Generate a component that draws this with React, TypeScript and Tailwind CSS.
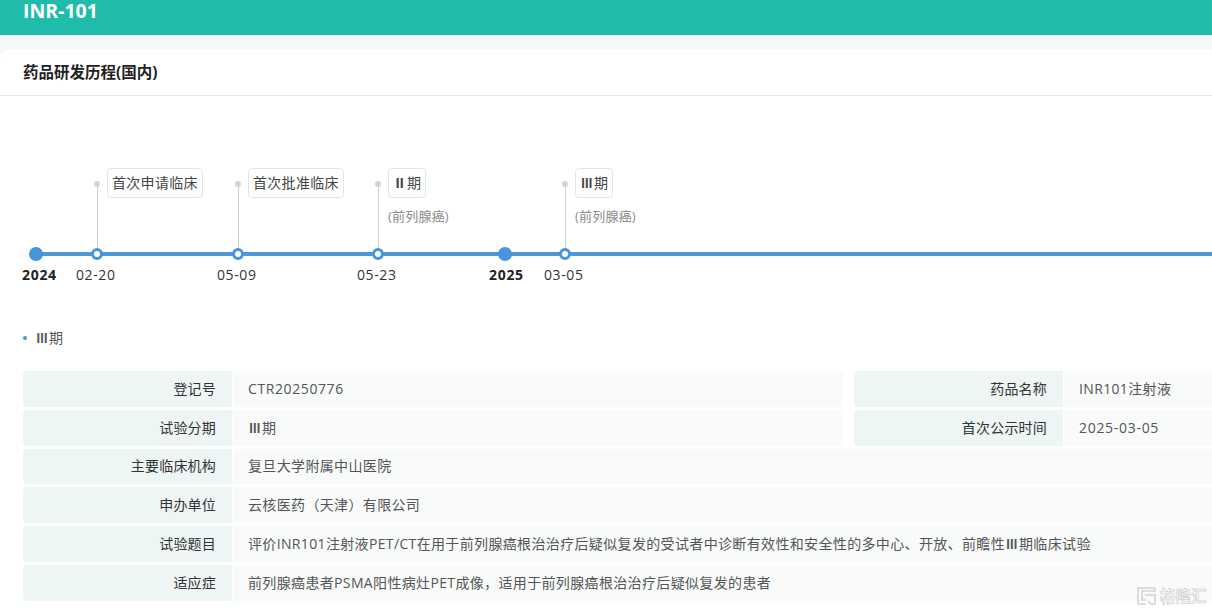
type Milestone = {
  left: string
  date: string
  dateLeft: string
  year?: boolean
  tag?: React.ReactNode
  note?: string
}

// 罗马数字要撑满一个全角宽度，和原图一致
const Roman = ({ n }: { n: 'Ⅱ' | 'Ⅲ' }) => (
  <>
    <span className={`inline-block w-[14px] text-center font-['DejaVu_Sans',sans-serif] ${n === 'Ⅱ' ? 'scale-x-[1.5]' : 'scale-x-[1.35]'}`}>
      {n}
    </span>
    期
  </>
)

const milestones: Milestone[] = [
  { left: 'left-[36px]', date: '2024', dateLeft: 'left-[-14px]', year: true },
  { left: 'left-[97px]', date: '02-20', dateLeft: 'left-[-21px]', tag: '首次申请临床' },
  { left: 'left-[238px]', date: '05-09', dateLeft: 'left-[-21px]', tag: '首次批准临床' },
  { left: 'left-[378px]', date: '05-23', dateLeft: 'left-[-21px]', tag: <Roman n="Ⅱ" />, note: '(前列腺癌)' },
  { left: 'left-[505px]', date: '2025', dateLeft: 'left-[-16px]', year: true },
  { left: 'left-[565px]', date: '03-05', dateLeft: 'left-[-21px]', tag: <Roman n="Ⅲ" />, note: '(前列腺癌)' },
]

function Node({ item }: { item: Milestone }) {
  if (item.year) {
    return (
      <div className={`absolute top-0 ${item.left}`}>
        <div className="absolute left-[-7px] top-[143px] h-[14px] w-[14px] rounded-full bg-[#4596dc]" />
        <div className={`absolute top-[161px] whitespace-nowrap text-[14px] font-bold leading-[20px] tracking-[0.7px] text-[#222] ${item.dateLeft}`}>
          {item.date}
        </div>
      </div>
    )
  }
  return (
    <div className={`absolute top-0 ${item.left}`}>
      <div className="absolute left-[-3px] top-[77px] h-[6px] w-[6px] rounded-full bg-[#d4d4d4]" />
      <div className="absolute left-0 top-[80px] h-[68px] w-px bg-[#d0d0d0]" />
      <div className="absolute left-[10px] top-[64px] whitespace-nowrap rounded-[4px] border border-[#e4e4e4] bg-white px-[4px] py-[4px] text-[14px] leading-[20px] tracking-[0.3px] text-[#444]">
        {item.tag}
      </div>
      {item.note && (
        <div className="absolute left-[10px] top-[102px] whitespace-nowrap text-[13px] leading-[20px] tracking-[0.2px] text-[#8a8a8a]">
          {item.note}
        </div>
      )}
      <div className="absolute left-[-6px] top-[144px] h-[12px] w-[12px] rounded-full border-[3px] border-[#4596dc] bg-white" />
      <div className={`absolute top-[161px] whitespace-nowrap text-[14px] leading-[20px] tracking-[0.6px] text-[#333] ${item.dateLeft}`}>
        {item.date}
      </div>
    </div>
  )
}

function Cell({ label, children }: { label: string; children: React.ReactNode }) {
  return (
    <div className="flex h-[35.8px] min-w-0">
      <div className="flex w-[209px] shrink-0 items-center justify-end rounded-l-[4px] bg-[#edf5f5] pr-4 text-sm tracking-[0.2px] text-[#333]">
        {label}
      </div>
      <div className="ml-px flex flex-1 items-center whitespace-pre bg-[#f8fbfa] pl-[15px] text-sm tracking-[0.35px] text-[#555]">
        <span>{children}</span>
      </div>
    </div>
  )
}

export default function App() {
  return (
    <div className="relative h-[612px] w-[1212px] overflow-hidden bg-[#f7f6fb] font-['Open_Sans','Noto_Sans_CJK_SC',sans-serif]">
      <div className="flex h-[35px] items-start bg-[#1fbcac] pl-[23px]">
        <h1 className="text-[19.5px] font-bold leading-[22px] text-white">INR-101</h1>
      </div>

      <div className="mt-[14px] h-[563px] rounded-tl-[10px] bg-white">
        <div className="flex h-[47px] items-center border-b border-[#e8e8e8] pl-[23px] pt-[2px]">
          <h2 className="text-[15.5px] font-bold text-[#222]">药品研发历程(国内)</h2>
        </div>

        {/* 时间轴 */}
        <div className="relative mt-2 h-[224px] w-full overflow-hidden">
          <div className="absolute left-[36px] right-0 top-[148px] h-[4px] bg-[#4a98d8]" />
          {milestones.map((item) => (
            <Node key={item.left} item={item} />
          ))}
        </div>

        <div className="flex items-center gap-[8px] pl-[23px] text-[14px] leading-[20px] text-[#555]">
          <span className="h-[4px] w-[4px] rounded-full bg-[#4596dc]" />
          <span><Roman n="Ⅲ" /></span>
        </div>

        <div className="mt-[23px] flex flex-col gap-[3px] pl-[23px]">
          <div className="flex gap-[11px]">
            <div className="w-[820px] shrink-0">
              <Cell label="登记号"><span className="tracking-[0.6px]">CTR20250776</span></Cell>
            </div>
            <div className="flex-1">
              <Cell label="药品名称">INR101注射液</Cell>
            </div>
          </div>
          <div className="flex gap-[11px]">
            <div className="w-[820px] shrink-0">
              <Cell label="试验分期"><Roman n="Ⅲ" /></Cell>
            </div>
            <div className="flex-1">
              <Cell label="首次公示时间"><span className="tracking-[0.7px]">2025-03-05</span></Cell>
            </div>
          </div>
          <Cell label="主要临床机构">复旦大学附属中山医院</Cell>
          <Cell label="申办单位">云核医药（天津）有限公司</Cell>
          <Cell label="试验题目">评价INR101注射液PET/CT在用于前列腺癌根治治疗后疑似复发的受试者中诊断有效性和安全性的多中心、开放、前瞻性<Roman n="Ⅲ" />临床试验</Cell>
          <Cell label="适应症">前列腺癌患者PSMA阳性病灶PET成像，适用于前列腺癌根治治疗后疑似复发的患者</Cell>
        </div>
      </div>

      {/* 水印 */}
      <div className="absolute left-[1137px] top-[586px] flex items-center gap-[3px]">
        <svg width="20" height="18" viewBox="0 0 20 18" fill="none" stroke="#d2d2d2" strokeWidth="1.5">
          <path d="M18 1H1v16h8" />
          <path d="M18 1v3H5v9h4" />
          <path d="M8 8h10v9h-4l-3-3" />
        </svg>
        <span className="text-[15.5px] font-bold leading-[20px] text-white [-webkit-text-stroke:0.6px_#c8c8c8]">格隆汇</span>
      </div>
    </div>
  )
}
